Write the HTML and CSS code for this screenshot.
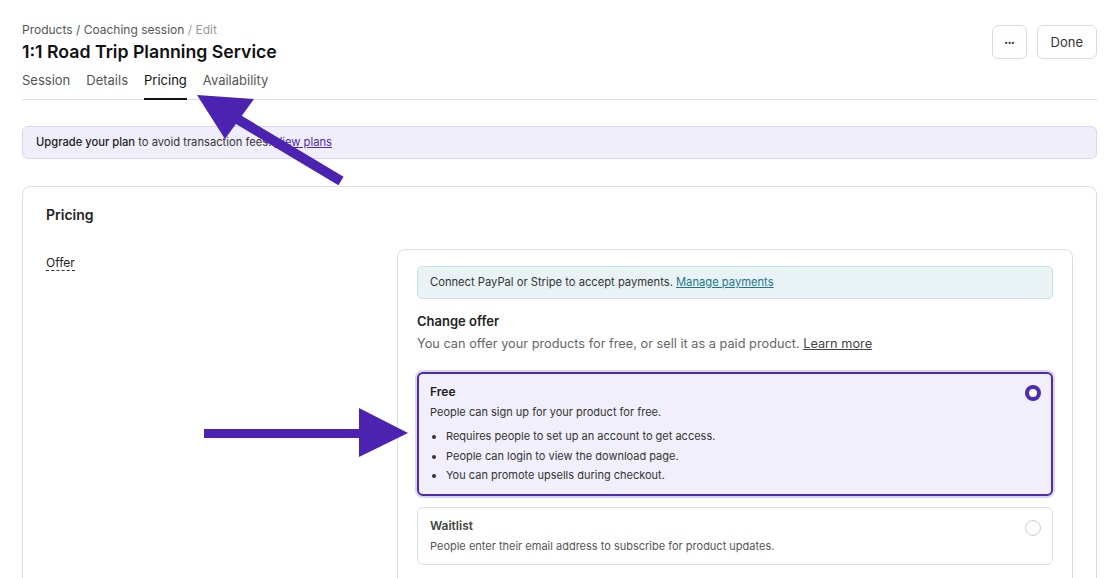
FILE: index.html
```html
<!DOCTYPE html>
<html lang="en">
<head>
    <meta charset="UTF-8">
    <title>1:1 Road Trip Planning Service - Pricing</title>
    <link rel="stylesheet" href="styles.css">
</head>
<body>
    <!-- Page header -->
    <div class="page-header">
        <div class="page-title">
            <div class="breadcrumb">Products / Coaching session <span class="crumb-muted">/ Edit</span></div>
            <h1>1:1 Road Trip Planning Service</h1>
        </div>
        <div class="header-actions">
            <button class="btn btn-icon">&middot;&middot;&middot;</button>
            <button class="btn">Done</button>
        </div>
    </div>

    <div class="tabs">
        <a href="#" class="tab">Session</a>
        <a href="#" class="tab">Details</a>
        <a href="#" class="tab active">Pricing</a>
        <a href="#" class="tab">Availability</a>
    </div>

    <div class="banner">
        <strong>Upgrade your plan</strong> to avoid transaction fees. <a href="#">View plans</a>
    </div>

    <!-- Pricing card -->
    <div class="card">
        <h2>Pricing</h2>
        <div class="field-row">
            <div class="field-label"><span>Offer</span></div>
            <div class="field-body">
                <div class="info-box">
                    Connect PayPal or Stripe to accept payments. <a href="#">Manage payments</a>
                </div>

                <h3>Change offer</h3>
                <p class="hint">You can offer your products for free, or sell it as a paid product. <a href="#">Learn more</a></p>

                <div class="option selected">
                    <div class="option-text">
                        <div class="option-title">Free</div>
                        <div class="option-desc">People can sign up for your product for free.</div>
                        <ul>
                            <li>Requires people to set up an account to get access.</li>
                            <li>People can login to view the download page.</li>
                            <li>You can promote upsells during checkout.</li>
                        </ul>
                    </div>
                    <span class="radio checked"></span>
                </div>

                <div class="option">
                    <div class="option-text">
                        <div class="option-title">Waitlist</div>
                        <div class="option-desc">People enter their email address to subscribe for product updates.</div>
                    </div>
                    <span class="radio"></span>
                </div>
            </div>
        </div>
    </div>

    <!-- Annotation arrows -->
    <svg class="annotations" width="1118" height="578" viewBox="0 0 1118 578">
        <line x1="234" y1="117" x2="341" y2="181" stroke="#4b23b0" stroke-width="10"/>
        <polygon points="197,95 254,99 225,139" fill="#4b23b0"/>
        <rect x="204" y="429" width="158" height="9" fill="#4b23b0"/>
        <polygon points="359,408 408,433 359,457" fill="#4b23b0"/>
    </svg>
</body>
</html>
```

FILE: styles.css
```css
body {
    font-family: Inter, "Noto Sans", sans-serif;
    margin: 0;
    padding: 22px 21px 40px 22px;
    background-color: white;
    color: #1a1a1a;
    position: relative;
}

a {
    color: inherit;
}

.page-header {
    display: flex;
    justify-content: space-between;
    align-items: flex-start;
}

.breadcrumb {
    font-size: 12px;
    line-height: 16px;
    color: #555;
}

.crumb-muted {
    color: #9a9a9a;
}

h1 {
    margin: 2px 0 0;
    font-size: 17.7px;
    line-height: 24px;
    font-weight: 600;
    color: #111;
}

.header-actions {
    display: flex;
    gap: 10px;
    margin-top: 3px;
}

.btn {
    height: 34px;
    padding: 0 13px;
    background-color: white;
    border: 1px solid #dcdcdc;
    border-radius: 6px;
    font-family: inherit;
    font-size: 13px;
    color: #333;
}

.btn-icon {
    width: 35px;
    padding: 0;
    font-size: 13px;
    font-weight: 700;
    letter-spacing: -1px;
    color: #444;
}

.tabs {
    display: flex;
    gap: 16px;
    margin-top: 6px;
    border-bottom: 1px solid #e0e0e0;
}

.tab {
    font-size: 13px;
    line-height: 20px;
    padding-bottom: 8px;
    margin-bottom: -1px;
    color: #555;
    text-decoration: none;
    border-bottom: 2px solid transparent;
}

.tab.active {
    color: #111;
    border-bottom-color: #111;
}

.banner {
    margin-top: 26px;
    padding: 0 13px;
    line-height: 31px;
    background-color: #f1eefb;
    border: 1px solid #dad5f0;
    border-radius: 6px;
    font-size: 11.2px;
    color: #333;
}

.banner strong {
    font-weight: 500;
    color: #222;
}

.banner a {
    color: #4b2bb0;
}

.card {
    margin-top: 27px;
    padding: 18px 23px 20px;
    border: 1px solid #dedede;
    border-radius: 8px;
}

h2 {
    margin: 0;
    font-size: 14px;
    line-height: 20px;
    font-weight: 600;
    color: #222;
}

.field-row {
    display: flex;
    margin-top: 24px;
}

.field-label {
    width: 351px;
    flex-shrink: 0;
    padding-top: 6px;
    font-size: 12px;
    line-height: 16px;
    color: #222;
}

.field-label span {
    border-bottom: 1px dashed #333;
}

.field-body {
    flex: 1;
    padding: 16px 19px 24px;
    border: 1px solid #dedede;
    border-radius: 8px;
}

.info-box {
    padding: 0 12px;
    line-height: 31px;
    background-color: #e9f3f6;
    border: 1px solid #c9e0e7;
    border-radius: 5px;
    font-size: 11.2px;
    color: #333;
}

.info-box a {
    color: #1d7590;
}

h3 {
    margin: 13px 0 0;
    font-size: 13px;
    line-height: 18px;
    font-weight: 600;
    color: #222;
}

.hint {
    margin: 5px 0 0;
    font-size: 12.75px;
    line-height: 18px;
    color: #666;
}

.hint a {
    color: #444;
}

.option {
    display: flex;
    justify-content: space-between;
    align-items: flex-start;
    margin-top: 11px;
    padding: 10px 11px 10px 12px;
    border: 1px solid #dedede;
    border-radius: 6px;
}

.option.selected {
    margin-top: 19px;
    padding: 10px 10px 8px 11px;
    background-color: #f1effb;
    border: 2px solid #4b2bb0;
    box-shadow: 0 0 0 2px #dcd6f3;
}

.option-title {
    font-size: 12px;
    line-height: 16px;
    font-weight: 600;
    color: #444;
}

.selected .option-title {
    color: #222;
}

.option-desc {
    margin-top: 4px;
    font-size: 11px;
    line-height: 16px;
    color: #555;
}

.selected .option-desc {
    color: #333;
}

.option ul {
    margin: 7px 0 0;
    padding-left: 16px;
    font-size: 11px;
    line-height: 19.5px;
    color: #333;
}

.radio {
    width: 16px;
    height: 16px;
    box-sizing: border-box;
    border: 1px solid #cfcfcf;
    border-radius: 50%;
    background-color: white;
    flex-shrink: 0;
    margin-top: 2px;
}

.selected .radio {
    margin-top: 1px;
}

.radio.checked {
    border: 4px solid #4b2bb0;
}

.annotations {
    position: absolute;
    left: 0;
    top: 0;
    pointer-events: none;
}
```
